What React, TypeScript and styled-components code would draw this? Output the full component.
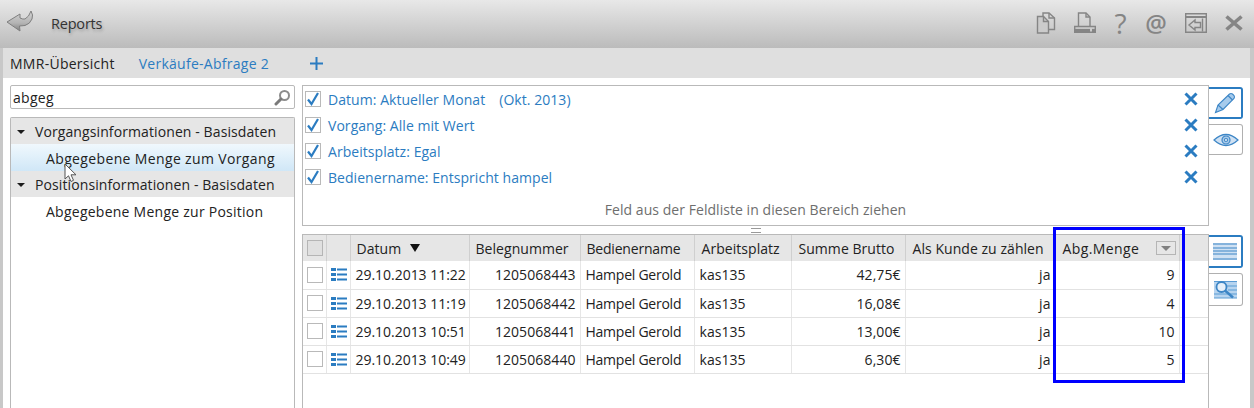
import React from 'react';
import styled, { createGlobalStyle } from 'styled-components';

const filters = [
    { label: 'Datum: Aktueller Monat', extra: '(Okt. 2013)' },
    { label: 'Vorgang: Alle mit Wert' },
    { label: 'Arbeitsplatz: Egal' },
    { label: 'Bedienername: Entspricht hampel' },
];

const rows = [
    { date: '29.10.2013 11:22', nr: '1205068443', sum: '42,75€', qty: 9 },
    { date: '29.10.2013 11:19', nr: '1205068442', sum: '16,08€', qty: 4 },
    { date: '29.10.2013 10:51', nr: '1205068441', sum: '13,00€', qty: 10 },
    { date: '29.10.2013 10:49', nr: '1205068440', sum: '6,30€', qty: 5 },
];

const BackIcon = () => (
    <svg width="28" height="24" viewBox="0 0 28 24">
        <defs>
            <linearGradient id="backFill" x1="0" y1="0" x2="0" y2="1">
                <stop offset="0" stopColor="#d4d4d4" />
                <stop offset="0.6" stopColor="#b4b4b4" />
                <stop offset="1" stopColor="#808080" />
            </linearGradient>
        </defs>
        <path d="M1 12 L14 4 L14 8 Q17 9.5 19 9 Q23 7 25 1 Q27.5 5 26 9 Q24 14 19 15.5 L13.5 16 L14 21 Z" fill="url(#backFill)" stroke="#7f7f7f" strokeWidth="1" strokeLinejoin="round" />
    </svg>
);

const CopyIcon = () => (
    <svg width="20" height="22" viewBox="0 0 20 22" fill="none" stroke="#858585" strokeWidth="1.4">
        <path d="M7 4 V1 H13 L18.5 6 V17.5 H12.5" />
        <path d="M13 1 V6 H18.5" />
        <path d="M1.5 4.5 H7.5 L12.5 9.5 V21 H1.5 Z" fill="#cbcbcb" />
        <path d="M7.5 4.5 V9.5 H12.5" />
    </svg>
);

const PrintIcon = () => (
    <svg width="22" height="21" viewBox="0 0 22 21" fill="none" stroke="#858585" strokeWidth="1.4">
        <path d="M4.5 14 V1 H12 L16 5 V14" />
        <path d="M12 1 V5 H16" />
        <path d="M0.7 14.5 H21.3 V20.3 H0.7 Z" />
        <path d="M1 18.5 H16" strokeWidth="3.2" />
        <path d="M18 18.5 H21" strokeWidth="3.2" />
    </svg>
);

const ExitIcon = () => (
    <svg width="22" height="20" viewBox="0 0 22 20" fill="none" stroke="#858585" strokeWidth="1.4">
        <path d="M0.7 0.7 H21.3 V19.3 H0.7 Z" />
        <path d="M0.7 4 H21.3" strokeWidth="2" />
        <path d="M4 12 L10 7 V9.5 H15.5 V14.5 H10 V17 Z" />
        <path d="M17.5 5.5 V18.5" />
    </svg>
);

const CloseIcon = ({ width, height, color, weight }: { width: number; height: number; color: string; weight: number }) => (
    <svg width={width} height={height} viewBox={`0 0 ${width} ${height}`} stroke={color} strokeWidth={weight} fill="none">
        <path d={`M1.5 1.5 L${width - 1.5} ${height - 1.5} M${width - 1.5} 1.5 L1.5 ${height - 1.5}`} />
    </svg>
);

const SearchIcon = () => (
    <svg width="17" height="17" viewBox="0 0 17 17" fill="none">
        <circle cx="10.5" cy="6.5" r="4.5" stroke="#8c8c8c" strokeWidth="2" />
        <path d="M7 10 L2 15" stroke="#7a7a7a" strokeWidth="3" strokeLinecap="round" />
    </svg>
);

const Tick = () => (
    <svg width="14" height="14" viewBox="0 0 14 14" fill="none">
        <path d="M2 7.5 L5.5 12 L12 1" stroke="#2b7cc1" strokeWidth="2.2" />
    </svg>
);

const ListIcon = () => (
    <svg width="16" height="13" viewBox="0 0 16 13" fill="#2b7cc1">
        <rect x="0" y="0" width="5" height="3" />
        <rect x="6" y="0.5" width="10" height="2" />
        <rect x="0" y="5" width="5" height="3" />
        <rect x="6" y="5.5" width="10" height="2" />
        <rect x="0" y="10" width="5" height="3" />
        <rect x="6" y="10.5" width="10" height="2" />
    </svg>
);

const PencilIcon = () => (
    <svg width="22" height="22" viewBox="0 0 22 22" fill="#a6cbec" stroke="#3d86c6" strokeWidth="1.1">
        <path d="M1.5 20.5 L4 13 L15.5 2 Q17 1 18.5 2 L20 3.5 Q21 5 20 6.5 L9 17.5 Z" />
        <path d="M4 13 L9 17.5 M14 3.5 L18.5 8" fill="none" />
    </svg>
);

const EyeIcon = () => (
    <svg width="26" height="14" viewBox="0 0 26 14" fill="#cfe1f3" stroke="#3d86c6" strokeWidth="1.2">
        <path d="M1 7 Q13 -4 25 7 Q13 18 1 7 Z" />
        <circle cx="13" cy="7" r="4" fill="#a9cbea" />
        <circle cx="13" cy="7" r="1.5" fill="#fff" />
    </svg>
);

const LinesIcon = () => (
    <svg width="24" height="17" viewBox="0 0 24 17" fill="none">
        <rect x="0" y="0" width="24" height="17" fill="#cfe1f3" />
        <path d="M0 1 H24 M0 5 H24 M0 8 H24 M0 11 H24 M0 16 H24" stroke="#3d86c6" strokeWidth="1.2" />
    </svg>
);

const SearchListIcon = () => (
    <svg width="24" height="20" viewBox="0 0 24 20" fill="none">
        <rect x="0" y="1" width="23" height="17" fill="#b7d4ef" />
        <path d="M0 1.5 H23 M12 6 H23 M14 10 H23 M0 14 H23 M0 18 H23" stroke="#5a9bd4" strokeWidth="1.2" />
        <circle cx="7.5" cy="7" r="5" fill="#e6f0fa" stroke="#3d86c6" strokeWidth="1.8" />
        <path d="M11 10.5 L19 17.5" stroke="#3d86c6" strokeWidth="2.5" />
    </svg>
);

const MouseCursor = () => (
    <svg width="14" height="20" viewBox="0 0 14 20">
        <path d="M1 1 V16 L4.5 12.8 L7 18.5 L9.5 17.3 L7 11.8 H12 Z" fill="#ffffff" stroke="#555" strokeWidth="1" />
    </svg>
);

export default function App() {
    return (
        <>
            <GlobalStyle />
            <Window>
                <TitleBar>
                    <BackButton><BackIcon /></BackButton>
                    <AppTitle>Reports</AppTitle>
                    <ToolIcons>
                        <CopyIcon />
                        <PrintIcon />
                        <Glyph $width={13}>?</Glyph>
                        <Glyph $width={22} $bold>@</Glyph>
                        <ExitIcon />
                        <CloseIcon width={18} height={16} color="#858585" weight={3.6} />
                    </ToolIcons>
                </TitleBar>
                <Body>
                    <TabStrip>
                        <Tab>MMR-Übersicht</Tab>
                        <Tab $link>Verkäufe-Abfrage 2</Tab>
                        <AddTab>
                            <svg width="13" height="13" viewBox="0 0 13 13" stroke="#2b7cc1" strokeWidth="2">
                                <path d="M6.5 0 V13 M0 6.5 H13" />
                            </svg>
                        </AddTab>
                    </TabStrip>
                    <Content>
                        <Sidebar>
                            <SearchBox>
                                <SearchText>abgeg</SearchText>
                                <SearchIcon />
                            </SearchBox>
                            <Tree>
                                <GroupRow><Caret />Vorgangsinformationen - Basisdaten</GroupRow>
                                <FieldRow $selected>Abgegebene Menge zum Vorgang</FieldRow>
                                <GroupRow><Caret />Positionsinformationen - Basisdaten</GroupRow>
                                <FieldRow>Abgegebene Menge zur Position</FieldRow>
                                <CursorSpot><MouseCursor /></CursorSpot>
                            </Tree>
                        </Sidebar>
                        <Main>
                            <PanelRow>
                                <FilterPanel>
                                    <FilterList>
                                        {filters.map(f => (
                                            <FilterRow key={f.label}>
                                                <CheckBox><Tick /></CheckBox>
                                                <FilterText>
                                                    {f.label}
                                                    {f.extra && <FilterExtra>{f.extra}</FilterExtra>}
                                                </FilterText>
                                                <CloseIcon width={14} height={14} color="#2b7cc1" weight={3} />
                                            </FilterRow>
                                        ))}
                                    </FilterList>
                                    <DropHint>Feld aus der Feldliste in diesen Bereich ziehen</DropHint>
                                </FilterPanel>
                                <SideTabs $gap={5} $top={2}>
                                    <SideTab $active $height={32}><PencilIcon /></SideTab>
                                    <SideTab $height={31}><EyeIcon /></SideTab>
                                </SideTabs>
                            </PanelRow>
                            <Splitter><Grip /></Splitter>
                            <PanelRow $grow>
                                <GridPanel>
                                    <Grid>
                                        <colgroup>
                                            <col width={23} />
                                            <col width={24} />
                                            <col width={119} />
                                            <col width={111} />
                                            <col width={114} />
                                            <col width={97} />
                                            <col width={114} />
                                            <col width={150} />
                                            <col width={124} />
                                            <col />
                                        </colgroup>
                                        <thead>
                                            <tr>
                                                <HeadCell $center><HeadBox /></HeadCell>
                                                <HeadCell />
                                                <HeadCell $pad={6}>Datum<SortMark /></HeadCell>
                                                <HeadCell $pad={6}>Belegnummer</HeadCell>
                                                <HeadCell $pad={6} $spacing={-0.2}>Bedienername</HeadCell>
                                                <HeadCell>Arbeitsplatz</HeadCell>
                                                <HeadCell>Summe Brutto</HeadCell>
                                                <HeadCell>Als Kunde zu zählen</HeadCell>
                                                <HeadCell $spacing={0.4}>
                                                    <HeadSplit>
                                                        Abg.Menge
                                                        <FilterDrop />
                                                    </HeadSplit>
                                                </HeadCell>
                                                <HeadCell $last />
                                            </tr>
                                        </thead>
                                        <tbody>
                                            {rows.map(r => (
                                                <tr key={r.nr}>
                                                    <Cell $center><RowBox /></Cell>
                                                    <Cell $center><ListIcon /></Cell>
                                                    <Cell $spacing={-0.03}>{r.date}</Cell>
                                                    <Cell $right>{r.nr}</Cell>
                                                    <Cell $spacing={-0.25}>Hampel Gerold</Cell>
                                                    <Cell>kas135</Cell>
                                                    <Cell $right>{r.sum}</Cell>
                                                    <Cell $right>ja</Cell>
                                                    <Cell $right>{r.qty}</Cell>
                                                    <Cell $last />
                                                </tr>
                                            ))}
                                        </tbody>
                                    </Grid>
                                    <Highlight />
                                </GridPanel>
                                <SideTabs $gap={5} $top={1}>
                                    <SideTab $active $height={33}><LinesIcon /></SideTab>
                                    <SideTab $height={33}><SearchListIcon /></SideTab>
                                </SideTabs>
                            </PanelRow>
                        </Main>
                    </Content>
                </Body>
            </Window>
        </>
    );
}

const GlobalStyle = createGlobalStyle`
    html, body {
        margin: 0;
        padding: 0;
        height: 408px;
        overflow: hidden;
        background: #c8c8c8;
    }
    body, table {
        font-family: "Open Sans", "Noto Sans", sans-serif;
        font-size: 14px;
        color: #222222;
    }
`;

const Window = styled.div`
    width: 1254px;
    height: 408px;
    display: flex;
    flex-direction: column;
    background: #c8c8c8;
    overflow: hidden;
`;

const TitleBar = styled.div`
    height: 48px;
    flex: none;
    display: flex;
    align-items: center;
    padding: 0 11px 0 6px;
    background: linear-gradient(#e8e8e8, #bbbbbb);
`;

const BackButton = styled.div`
    width: 28px;
    height: 24px;
    margin-bottom: 4px;
`;

const AppTitle = styled.div`
    margin-left: 17px;
    margin-bottom: 1px;
    font-size: 14.5px;
    color: #333333;
    letter-spacing: -0.2px;
    text-shadow: 1px 2px 3px rgba(0, 0, 0, 0.25);
`;

const ToolIcons = styled.div`
    margin-left: auto;
    margin-bottom: 3px;
    display: flex;
    align-items: center;
    gap: 18px;
`;

const Glyph = styled.span<{ $width: number; $bold?: boolean }>`
    width: ${props => props.$width}px;
    display: flex;
    justify-content: center;
    font-size: ${props => (props.$bold ? 24 : 28)}px;
    font-weight: ${props => (props.$bold ? 600 : 400)};
    line-height: 24px;
    color: #858585;
`;

const Body = styled.div`
    flex: 1;
    min-height: 0;
    margin: 0 4px 0 3px;
    display: flex;
    flex-direction: column;
    background: #ffffff;
`;

const TabStrip = styled.div`
    height: 30px;
    flex: none;
    display: flex;
    align-items: center;
    padding-left: 7px;
    gap: 24px;
    background: #dfdfdf;
`;

const Tab = styled.div<{ $link?: boolean }>`
    color: ${props => (props.$link ? '#2b7cc1' : '#222222')};
    letter-spacing: 0.27px;
`;

const AddTab = styled.div`
    display: flex;
    margin-left: 17px;
`;

const Content = styled.div`
    flex: 1;
    min-height: 0;
    display: flex;
    padding: 7px 7px 0 7px;
    gap: 7px;
`;

const Sidebar = styled.div`
    width: 285px;
    flex: none;
    display: flex;
    flex-direction: column;
    gap: 8px;
`;

const SearchBox = styled.div`
    height: 22px;
    flex: none;
    display: flex;
    align-items: center;
    justify-content: space-between;
    padding: 0 3px 0 2px;
    border: 1px solid #b9b9b9;
    border-radius: 2px;
`;

const SearchText = styled.span`
    letter-spacing: 0.3px;
`;

const Tree = styled.div`
    position: relative;
    flex: 1;
    border: 1px solid #b9b9b9;
    border-bottom: none;
    border-radius: 2px 2px 0 0;
`;

const GroupRow = styled.div`
    height: 26px;
    box-sizing: border-box;
    padding: 1px 0 0 6px;
    display: flex;
    align-items: center;
    background: #e6e6e6;
    letter-spacing: 0.1px;
`;

const Caret = styled.span`
    width: 0;
    height: 0;
    margin-right: 10px;
    border-left: 4px solid transparent;
    border-right: 4px solid transparent;
    border-top: 4px solid #1c1c1c;
`;

const FieldRow = styled.div<{ $selected?: boolean }>`
    height: 27px;
    box-sizing: border-box;
    padding: 1px 0 0 35px;
    display: flex;
    align-items: center;
    letter-spacing: ${props => (props.$selected ? 0.36 : 0.25)}px;
    background: ${props => (props.$selected ? 'linear-gradient(#f0f8fd, #d0e7f7)' : 'transparent')};
`;

const CursorSpot = styled.div`
    position: absolute;
    left: 53px;
    top: 45px;
`;

const Main = styled.div`
    flex: 1;
    min-width: 0;
    display: flex;
    flex-direction: column;
`;

const PanelRow = styled.div<{ $grow?: boolean }>`
    display: flex;
    align-items: flex-start;
    flex: ${props => (props.$grow ? '1' : 'none')};
    min-height: 0;
`;

const FilterPanel = styled.div`
    width: 905px;
    height: 139px;
    flex: none;
    display: flex;
    flex-direction: column;
    border: 1px solid #b9b9b9;
`;

const FilterList = styled.div`
    display: flex;
    flex-direction: column;
    padding: 0 10px 0 2px;
`;

const FilterRow = styled.div`
    height: 26px;
    display: flex;
    align-items: center;
    gap: 7px;
`;

const CheckBox = styled.div`
    width: 14px;
    height: 14px;
    border: 1px solid #b9b9b9;
    display: flex;
    align-items: center;
    justify-content: center;
`;

const FilterText = styled.div`
    flex: 1;
    color: #2b7cc1;
    letter-spacing: 0.05px;
`;

const FilterExtra = styled.span`
    margin-left: 14px;
`;

const DropHint = styled.div`
    margin-top: auto;
    padding-bottom: 6px;
    text-align: center;
    color: #6e6e6e;
    letter-spacing: 0.05px;
`;

const SideTabs = styled.div<{ $gap: number; $top: number }>`
    display: flex;
    flex-direction: column;
    gap: ${props => props.$gap}px;
    padding-top: ${props => props.$top}px;
`;

const SideTab = styled.div<{ $active?: boolean; $height: number }>`
    width: 34px;
    height: ${props => props.$height}px;
    box-sizing: border-box;
    display: flex;
    align-items: center;
    justify-content: center;
    background: #ffffff;
    border: ${props => (props.$active ? '2px solid #2b7cc1' : '1px solid #b0b0b0')};
    border-left: none;
    border-radius: 0 3px 3px 0;
`;

const Splitter = styled.div`
    height: 8px;
    flex: none;
    width: 907px;
    display: flex;
    align-items: center;
    justify-content: center;
`;

const Grip = styled.div`
    width: 10px;
    height: 3px;
    border-top: 1px solid #999999;
    border-bottom: 1px solid #999999;
`;

const GridPanel = styled.div`
    position: relative;
    width: 905px;
    flex: none;
    height: 100%;
    border: 1px solid #b9b9b9;
    border-bottom: none;
`;

const Grid = styled.table`
    width: 905px;
    table-layout: fixed;
    border-collapse: collapse;
    letter-spacing: 0.05px;
`;

const HeadCell = styled.th<{ $center?: boolean; $last?: boolean; $pad?: number; $spacing?: number }>`
    height: 26px;
    padding: 0 0 0 ${props => (props.$center ? 4 : props.$pad ?? 7)}px;
    box-sizing: border-box;
    background: #e6e6e6;
    border-right: ${props => (props.$last ? 'none' : '1px solid #cfcfcf')};
    font-weight: 400;
    text-align: left;
    white-space: nowrap;
    color: #222222;
    ${props => props.$spacing !== undefined && `letter-spacing: ${props.$spacing}px;`}
`;

const SortMark = styled.span`
    display: inline-block;
    margin-left: 9px;
    vertical-align: 2px;
    border-left: 5px solid transparent;
    border-right: 5px solid transparent;
    border-top: 8px solid #111111;
`;

const HeadBox = styled.div`
    width: 14px;
    height: 14px;
    border: 1px solid #b5b5b5;
    background: #e0e0e0;
`;

const HeadSplit = styled.div`
    display: flex;
    align-items: center;
    justify-content: space-between;
    padding-right: 3px;
`;

const FilterDrop = styled.div`
    width: 20px;
    height: 14px;
    box-sizing: border-box;
    border: 1px solid #b5b5b5;
    display: flex;
    align-items: center;
    justify-content: center;
    &::after {
        content: "";
        border-left: 5px solid transparent;
        border-right: 5px solid transparent;
        border-top: 5px solid #808080;
    }
`;

const Cell = styled.td<{ $center?: boolean; $right?: boolean; $last?: boolean; $spacing?: number }>`
    height: 28px;
    padding: 0 4px 0 ${props => (props.$center ? 4 : 5)}px;
    box-sizing: border-box;
    border-right: ${props => (props.$last ? 'none' : '1px solid #e6e6e6')};
    border-bottom: 1px solid #e2e2e2;
    text-align: ${props => (props.$right ? 'right' : props.$center ? 'center' : 'left')};
    white-space: nowrap;
    overflow: hidden;
    ${props => props.$center && 'line-height: 0;'}
    ${props => props.$spacing !== undefined && `letter-spacing: ${props.$spacing}px;`}
`;

const RowBox = styled.div`
    width: 14px;
    height: 14px;
    border: 1px solid #b9b9b9;
`;

const Highlight = styled.div`
    position: absolute;
    left: 750px;
    top: -8px;
    width: 126px;
    height: 150px;
    border: 3px solid #0000ff;
    pointer-events: none;
`;

void React;
